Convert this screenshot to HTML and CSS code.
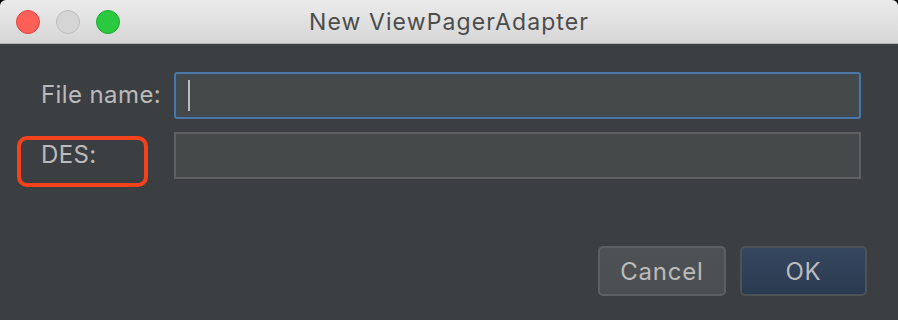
FILE: index.html
```html
<!DOCTYPE html>
<html lang="en">
  <head>
    <meta charset="UTF-8" />
    <title>New ViewPagerAdapter</title>
    <link rel="stylesheet" href="styles.css">
  </head>
  <body>
    <div class="window">
      <header class="titlebar">
        <div class="lights">
          <span class="light close"></span>
          <span class="light min"></span>
          <span class="light max"></span>
        </div>
        <div class="title">New ViewPagerAdapter</div>
      </header>

      <main class="form">
        <label class="label" for="filename">File name:</label>
        <div class="field focused">
          <span class="caret"></span>
        </div>

        <label class="label des" for="des">
          DES:
          <span class="mark"></span>
        </label>
        <div class="field"></div>
      </main>

      <footer class="actions">
        <button class="btn">Cancel</button>
        <button class="btn primary">OK</button>
      </footer>
    </div>
  </body>
</html>
```

FILE: styles.css
```css
* {
  margin: 0;
  padding: 0;
  box-sizing: border-box;
}

html,
body {
  width: 898px;
  height: 320px;
  overflow: hidden;
  background-color: #000;
}

.window {
  display: flex;
  flex-direction: column;
  width: 898px;
  height: 320px;
  background-color: #3c3f41;
  border-radius: 6px 6px 0 0;
  overflow: hidden;
  font-family: "Inter", "Liberation Sans", sans-serif;
}

.titlebar {
  display: flex;
  align-items: center;
  height: 44px;
  background: linear-gradient(#ebebeb, #d6d6d6);
  border-bottom: 1px solid #b4b4b4;
  position: relative;
}

.lights {
  display: flex;
  gap: 16px;
  padding-left: 16px;
  padding-top: 1px;
}

.light {
  width: 24px;
  height: 24px;
  border-radius: 50%;
}

.close {
  background-color: #fe5f57;
  border: 1px solid #e2463f;
}

.min {
  background-color: #d5d5d5;
  border: 1px solid #bdbdbd;
}

.max {
  background-color: #2ac940;
  border: 1px solid #1eaa30;
}

.title {
  position: absolute;
  left: 0;
  right: 0;
  text-align: center;
  font-size: 23px;
  letter-spacing: 1.1px;
  color: #4c4c4c;
  padding-top: 1px;
}

.form {
  display: grid;
  grid-template-columns: 133px 687px;
  grid-auto-rows: 47px;
  row-gap: 13px;
  align-items: center;
  padding: 28px 0 0 41px;
}

.label {
  font-size: 24px;
  letter-spacing: 0.4px;
  color: #bbbbbb;
  position: relative;
  padding-bottom: 2px;
}

.field {
  height: 100%;
  background-color: #45494a;
  border: 2px solid #5e6061;
  display: flex;
  align-items: center;
  padding-left: 12px;
}

.field.focused {
  border: 2px solid #4a77a6;
  border-radius: 3px;
  box-shadow: inset 0 0 0 1px #3b4a58;
}

.caret {
  width: 2px;
  height: 31px;
  background-color: #bbbbbb;
}

.mark {
  position: absolute;
  left: -24px;
  top: -4px;
  width: 131px;
  height: 51px;
  border: 4px solid #f3421c;
  border-radius: 10px;
}

.actions {
  display: flex;
  justify-content: flex-end;
  gap: 14px;
  padding: 67px 31px 0 0;
}

.btn {
  width: 128px;
  height: 50px;
  font-family: inherit;
  font-size: 24px;
  letter-spacing: 0.8px;
  color: #bbbbbb;
  background: linear-gradient(#4e5254, #4a4e50);
  border: 2px solid #5d6062;
  border-radius: 5px;
}

.btn.primary {
  width: 127px;
  background: linear-gradient(#35475f, #2a3a51);
  border-color: #4d5257;
}
```
